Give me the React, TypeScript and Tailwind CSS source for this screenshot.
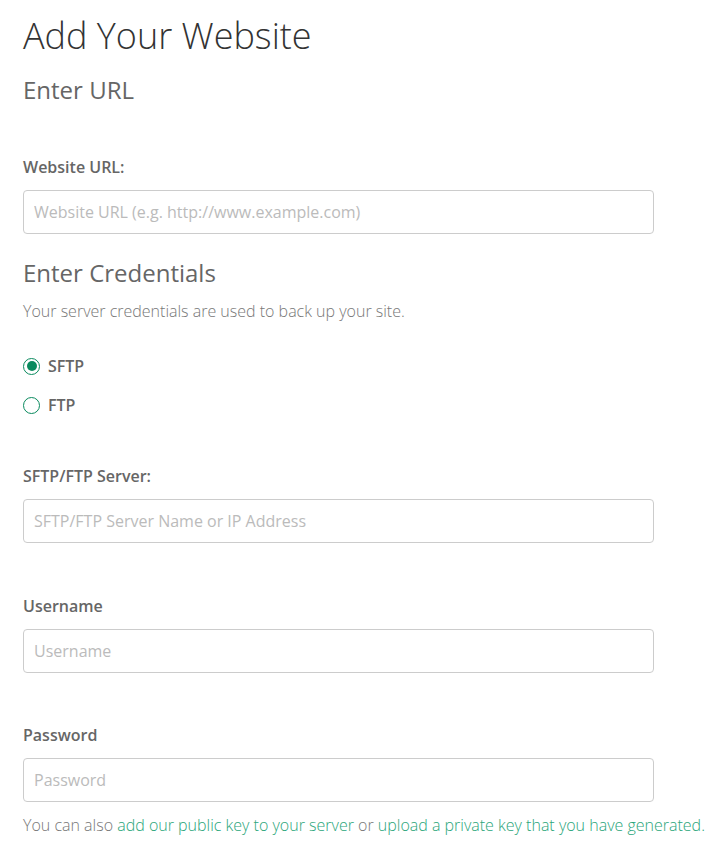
import React from "react";

const font = { fontFamily: '"Open Sans", "Noto Sans", sans-serif' };

function Field({ label, placeholder, type = "text", className = "" }: { label: string; placeholder: string; type?: string; className?: string }) {
  return (
    <div className={"flex flex-col " + className}>
      <label className="text-[16px] font-semibold text-[#666] leading-[22px]">{label}</label>
      <input
        type={type}
        placeholder={placeholder}
        className="mt-[12px] h-[44px] w-[631px] rounded-[4px] border border-[#ccc] px-[10px] text-[16px] text-[#555] placeholder:text-[#bbb] outline-none"
      />
    </div>
  );
}

function Radio({ checked, label }: { checked?: boolean; label: string }) {
  return (
    <label className="flex items-center gap-[8px] h-[20px]">
      <span className="flex h-[17px] w-[17px] items-center justify-center rounded-full border-[1.5px] border-[#0a8a5e]">
        {checked && <span className="h-[10px] w-[10px] rounded-full bg-[#0a8a5e]" />}
      </span>
      <span className="text-[16px] font-semibold text-[#666]">{label}</span>
    </label>
  );
}

export default function App() {
  return (
    <div className="bg-white min-h-[856px] w-[725px] pl-[23px]" style={font}>
      <h1 className="pt-[14px] text-[36px] font-light leading-[44px] text-[#333]">Add Your Website</h1>
      <h2 className="mt-[16px] text-[24px] font-normal leading-[32px] text-[#666]">Enter URL</h2>
      <Field className="mt-[50px]" label="Website URL:" placeholder="Website URL (e.g. http://www.example.com)" />
      <h2 className="mt-[23px] text-[24px] font-normal leading-[32px] text-[#666]">Enter Credentials</h2>
      <p className="mt-[11px] text-[16px] font-light leading-[22px] text-[#777]">
        Your server credentials are used to back up your site.
      </p>
      <div className="mt-[34px] flex flex-col gap-[19px]">
        <Radio checked label="SFTP" />
        <Radio label="FTP" />
      </div>
      <Field className="mt-[50px]" label="SFTP/FTP Server:" placeholder="SFTP/FTP Server Name or IP Address" />
      <Field className="mt-[52px]" label="Username" placeholder="Username" />
      <Field className="mt-[51px]" label="Password" placeholder="Password" type="password" />
      <p className="mt-[12px] text-[16px] font-light leading-[22px] text-[#777] whitespace-nowrap">
        You can also <a className="text-[#2aa57a]">add our public key to your server</a> or{" "}
        <a className="text-[#2aa57a]">upload a private key that you have generated.</a>
      </p>
    </div>
  );
}
